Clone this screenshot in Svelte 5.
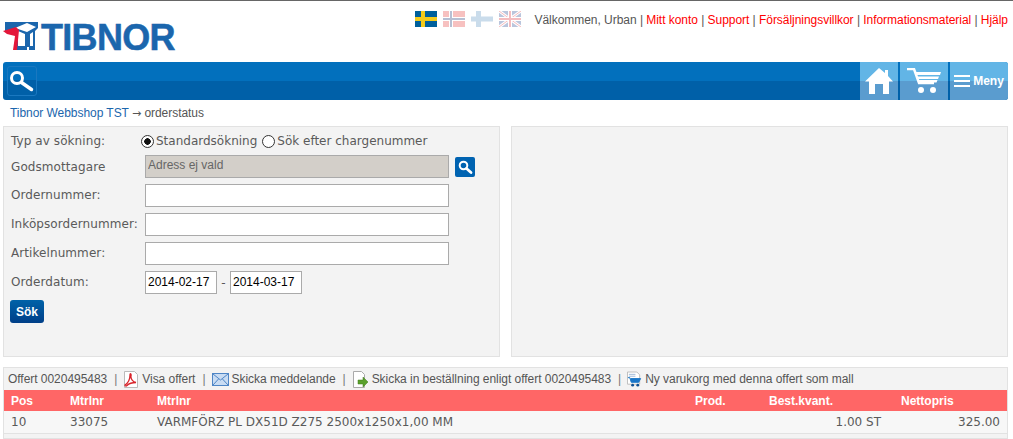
<script>
  const flags = [
    { id: 'se', faded: false },
    { id: 'no', faded: true },
    { id: 'fi', faded: true },
    { id: 'gb', faded: true }
  ];
  const links = ['Mitt konto', 'Support', 'Försäljningsvillkor', 'Informationsmaterial', 'Hjälp'];
  const rows = [
    { label: 'Ordernummer:' },
    { label: 'Inköpsordernummer:' },
    { label: 'Artikelnummer:' }
  ];
</script>

<div class="page">
  <header class="top">
    <div class="logo">
      <svg width="38" height="30" viewBox="0 0 38 30">
        <path d="M2 0h33v6l-3 3v19h-6V25h-2v3H14V25h-2V12L2 10z" fill="#1b66ad" />
        <path d="M12 6l12-5 9 4-9 5zM15 9l7 3v12h-7zM27 12l3-2v14h-3z" fill="#fff" />
        <path d="M0 9l13-4 3 3-2 20h-4l2-14-8-2z" fill="#e4173a" />
      </svg>
      <span class="logo-text">TIBNOR</span>
    </div>
    <div class="top-right">
      <div class="flags">
        {#each flags as f}
          <svg class:faded={f.faded} width="22" height="16" viewBox="0 0 22 16">
            {#if f.id === 'se'}
              <rect width="22" height="16" fill="#00609c" />
              <path d="M6 0h4v16H6zM0 6h22v4H0z" fill="#f4cb1c" />
            {:else if f.id === 'no'}
              <rect width="22" height="16" fill="#e8403f" />
              <path d="M6 0h4v16H6zM0 6h22v4H0z" fill="#fff" />
              <path d="M7 0h2v16H7zM0 7h22v2H0z" fill="#1f3a7a" />
            {:else if f.id === 'fi'}
              <rect width="22" height="16" fill="#fff" />
              <path d="M5 0h5v16H5zM0 5.500h22v5H0z" fill="#5c94c4" />
            {:else}
              <rect width="22" height="16" fill="#2b4f96" />
              <path d="M0 0l22 16M22 0L0 16" stroke="#fff" stroke-width="3" />
              <path d="M0 0l22 16M22 0L0 16" stroke="#e0323a" stroke-width="1" />
              <path d="M9 0h4v16H9zM0 6h22v4H0z" fill="#fff" />
              <path d="M10 0h2v16h-2zM0 7h22v2H0z" fill="#e0323a" />
            {/if}
          </svg>
        {/each}
      </div>
      <div class="welcome">
        Välkommen, Urban
        {#each links as l}
          <span class="pipe">|</span> <a href="#top">{l}</a>{' '}
        {/each}
      </div>
    </div>
  </header>

  <nav class="bar">
    <button class="bar-search" aria-label="Sök">
      <svg width="26" height="26" viewBox="0 0 26 26">
        <circle cx="8" cy="10" r="5.500" fill="none" stroke="#fff" stroke-width="3" />
        <path d="M12.500 14.500l10 7" stroke="#fff" stroke-width="3.500" stroke-linecap="round" />
      </svg>
    </button>
    <div class="bar-items">
      <div class="bar-item home">
        <svg width="28" height="26" viewBox="0 0 28 26">
          <path d="M14 0l6 5V2h3v6l5 5.500h-4V26h-6V16h-8v10H4V13.500H0z" fill="#fff" />
        </svg>
      </div>
      <div class="bar-item cart">
        <svg width="34" height="26" viewBox="0 0 34 26">
          <path d="M0 1h7l5 14h15" fill="none" stroke="#fff" stroke-width="2.500" />
          <path d="M8 4h26l-1 3H9zM10 8.500h22l-1 2.500H11zM11.500 12h19l-1 2.500H12.500z" fill="#fff" />
          <circle cx="14" cy="22" r="3" fill="#fff" />
          <circle cx="26" cy="22" r="3" fill="#fff" />
        </svg>
      </div>
      <div class="bar-item menu">
        <span class="burger"><i></i><i></i><i></i></span>
        <span>Meny</span>
      </div>
    </div>
  </nav>

  <div class="crumbs"><a href="#top">Tibnor Webbshop TST</a> <span class="arrow">→</span> orderstatus</div>

  <div class="panels">
    <section class="panel form">
      <div class="row type">
        <span class="label short">Typ av sökning:</span>
        <label class="radio"><input type="radio" name="typ" checked /> Standardsökning</label>
        <label class="radio"><input type="radio" name="typ" /> Sök efter chargenummer</label>
      </div>
      <div class="row">
        <span class="label">Godsmottagare</span>
        <input class="text disabled" value="Adress ej vald" readonly />
        <button class="pick" aria-label="Välj adress">
          <svg width="16" height="16" viewBox="0 0 16 16">
            <circle cx="6.500" cy="6.500" r="3.800" fill="none" stroke="#fff" stroke-width="2" />
            <path d="M9.500 9.500l4.500 4" stroke="#fff" stroke-width="2.800" stroke-linecap="round" />
          </svg>
        </button>
      </div>
      {#each rows as r}
        <div class="row">
          <span class="label up">{r.label}</span>
          <input class="text" />
        </div>
      {/each}
      <div class="row">
        <span class="label up">Orderdatum:</span>
        <input class="date" value="2014-02-17" />
        <span class="dash">-</span>
        <input class="date" value="2014-03-17" />
      </div>
      <button class="submit">Sök</button>
    </section>
    <section class="panel"></section>
  </div>

  <section class="offer">
    <div class="tools">
      <span>Offert 0020495483</span>
      <span class="sep">|</span>
      <span class="tool">
        <svg width="16" height="17" viewBox="0 0 16 17">
          <path d="M1.500.500h10l3 3v13h-13z" fill="#fff" stroke="#bbb" />
          <path d="M2 14c3-2 5-6 5-10 0-2 1.500-1.500 1 1-.5 3 2 6 5 6.500-3 0-7 1-9 3-1 1-2 .500-2-.500z" fill="none" stroke="#d8232a" stroke-width="1.300" />
        </svg>
        Visa offert
      </span>
      <span class="sep">|</span>
      <span class="tool">
        <svg width="17" height="13" viewBox="0 0 17 13">
          <rect x=".5" y=".5" width="16" height="12" fill="#c9dcf3" stroke="#4f86c6" />
          <path d="M1 1l7.500 6L16 1M1 12l5.500-6M16 12l-5.500-6" fill="none" stroke="#4f86c6" />
        </svg>
        Skicka meddelande
      </span>
      <span class="sep">|</span>
      <span class="tool">
        <svg width="17" height="17" viewBox="0 0 17 17">
          <path d="M1.500.500h8l3 3v13h-11z" fill="#fff" stroke="#aaa" />
          <path d="M6 9h5V6l5 5-5 5v-3H6z" fill="#5aa02c" stroke="#3d7a1a" stroke-width=".5" />
        </svg>
        Skicka in beställning enligt offert 0020495483
      </span>
      <span class="sep">|</span>
      <span class="tool">
        <svg width="15" height="17" viewBox="0 0 16 17">
          <path d="M.500.500h10l3 3v10h-13z" fill="#fff" stroke="#bbb" />
          <path d="M2 3h7M2 5h7" stroke="#9db7d6" />
          <path d="M1 6.500h2l1.500 5h8l2-4H4" fill="#1a76c8" stroke="#1a76c8" />
          <circle cx="6" cy="14.500" r="1.500" fill="#0d4f91" />
          <circle cx="11.500" cy="14.500" r="1.500" fill="#0d4f91" />
        </svg>
        Ny varukorg med denna offert som mall
      </span>
    </div>
    <table>
      <colgroup>
        <col class="c-pos" /><col class="c-nr" /><col class="c-desc" /><col class="c-prod" /><col class="c-qty" /><col class="c-price" />
      </colgroup>
      <thead>
        <tr>
          <th>Pos</th><th>Mtrlnr</th><th>Mtrlnr</th><th>Prod.</th><th>Best.kvant.</th><th class="price-head">Nettopris</th>
        </tr>
      </thead>
      <tbody>
        <tr>
          <td>10</td><td>33075</td><td>VARMFÖRZ PL DX51D Z275 2500x1250x1,00 MM</td><td></td><td class="num">1.00 ST</td><td class="num">325.00</td>
        </tr>
      </tbody>
    </table>
  </section>
</div>

<style>
  :global(body) {
    margin: 0;
    background: #fff;
    font-family: "Liberation Sans", Arial, sans-serif;
    font-size: 12px;
    color: #555;
  }

  .page {
    height: 439px;
    overflow: hidden;
    border-top: 1px solid #666;
    box-sizing: border-box;
  }

  .top {
    display: flex;
    justify-content: space-between;
    height: 61px;
    padding: 0 5px 0 3px;
  }

  .logo {
    display: flex;
    align-items: flex-start;
    height: 30px;
    margin-top: 21px;
  }

  .logo-text {
    margin-top: 3px;
    font-size: 36px;
    line-height: 26px;
    font-weight: 700;
    color: #1b66ad;
    letter-spacing: -0.7px;
    -webkit-text-stroke: 0.5px #1b66ad;
  }

  .top-right {
    display: flex;
    gap: 14px;
    padding-top: 10px;
  }

  .flags {
    display: flex;
    gap: 6px;
  }

  .faded {
    opacity: 0.32;
  }

  .welcome {
    padding-top: 2px;
    line-height: 14px;
    white-space: nowrap;
    letter-spacing: -0.04px;
  }

  .welcome a {
    color: #f00;
    text-decoration: none;
  }

  .bar {
    display: flex;
    justify-content: space-between;
    height: 38px;
    margin: 0 5px 0 3px;
    border-radius: 3px;
    background: linear-gradient(#0270bd 50%, #0060a8 50%);
  }

  .bar-search {
    width: 30px;
    height: 30px;
    margin: 4px;
    padding: 0;
    display: flex;
    align-items: center;
    justify-content: center;
    border: 1px solid #1a78c0;
    border-radius: 3px;
    background: linear-gradient(#0270bd 45%, #0060a8 45%);
  }

  .bar-items {
    display: flex;
    gap: 2px;
  }

  .bar-item {
    display: flex;
    align-items: center;
    justify-content: center;
    color: #fff;
    font-weight: 700;
    background: linear-gradient(#62b5e6 50%, #5a9ccf 50%);
  }

  .home {
    width: 38px;
  }

  .cart {
    width: 48px;
  }

  .menu {
    width: 58px;
    gap: 3px;
    border-radius: 0 3px 3px 0;
  }

  .burger {
    display: flex;
    flex-direction: column;
    gap: 3px;
  }

  .burger i {
    display: block;
    width: 16px;
    height: 2px;
    background: #fff;
  }

  .crumbs {
    height: 26px;
    padding-left: 10px;
    line-height: 26px;
    letter-spacing: -0.05px;
  }

  .crumbs a {
    color: #1b66ad;
    text-decoration: none;
  }

  .arrow {
    font-family: "DejaVu Sans", sans-serif;
    font-size: 11px;
  }

  .panels {
    display: grid;
    grid-template-columns: 497px 497px;
    gap: 11px;
    margin: 0 5px 0 3px;
  }

  .panel {
    height: 231px;
    box-sizing: border-box;
    border: 1px solid #e2e2e2;
    background: #f3f3f3;
  }

  .form {
    padding: 0 6px;
    font-family: "DejaVu Sans", Verdana, sans-serif;
    color: #5a5a5a;
  }

  .row {
    display: flex;
    align-items: center;
    height: 23px;
    margin-bottom: 6px;
  }

  .type {
    height: 22px;
    margin-top: 3px;
    margin-bottom: 3px;
  }

  .label {
    width: 134px;
    margin-left: 1px;
    flex: none;
    white-space: nowrap;
    letter-spacing: 0.08px;
  }

  .short {
    width: 130px;
  }

  .up {
    margin-top: -2px;
  }

  .radio {
    display: flex;
    align-items: center;
    gap: 2px;
    margin-right: 5px;
    white-space: nowrap;
  }

  .radio input {
    appearance: none;
    box-sizing: border-box;
    width: 13px;
    height: 13px;
    margin: 0;
    border: 1px solid #333;
    border-radius: 50%;
    background: #fff;
  }

  .radio input:checked {
    background: radial-gradient(circle, #111 3px, #fff 3.500px);
  }

  .text,
  .date {
    box-sizing: border-box;
    height: 23px;
    padding: 0 2px 1px;
    border: 1px solid #aaa;
    background: #fff;
    font-family: "Liberation Sans", Arial, sans-serif;
    font-size: 12px;
    color: #000;
    outline: none;
  }

  .text {
    width: 304px;
  }

  .disabled {
    padding-bottom: 3px;
    background: #d3cfc9;
    color: #666;
  }

  .date {
    width: 72px;
  }

  .dash {
    width: 13px;
    text-align: center;
  }

  .pick {
    width: 20px;
    height: 20px;
    margin-left: 6px;
    padding: 0;
    display: flex;
    align-items: center;
    justify-content: center;
    border: none;
    border-radius: 2px;
    background: #0063b1;
  }

  .submit {
    display: block;
    width: 34px;
    height: 23px;
    padding: 0;
    border: none;
    border-radius: 3px;
    background: linear-gradient(#0062a8, #003f88);
    color: #fff;
    font-family: "Liberation Sans", Arial, sans-serif;
    font-size: 12px;
    font-weight: 700;
  }

  .offer {
    margin: 10px 5px 0 3px;
    height: 72px;
    border: 1px solid #e2e2e2;
    background: #f3f3f3;
    box-sizing: border-box;
  }

  .tools {
    display: flex;
    align-items: center;
    gap: 6px;
    height: 22px;
    padding-left: 4px;
    white-space: nowrap;
    letter-spacing: -0.04px;
  }

  .tool {
    display: flex;
    align-items: center;
    gap: 3px;
  }

  .sep {
    margin-left: 1px;
    color: #777;
  }

  table {
    width: 1003px;
    table-layout: fixed;
    border-collapse: collapse;
  }

  .c-pos { width: 59px; }
  .c-nr { width: 87px; }
  .c-desc { width: 538px; }
  .c-prod { width: 74px; }
  .c-qty { width: 126px; }
  .c-price { width: 119px; }

  th {
    height: 21px;
    padding: 1px 7px 0;
    box-sizing: border-box;
    background: #f66;
    color: #fff;
    font-size: 12px;
    text-align: left;
  }

  .price-head {
    padding-left: 13px;
  }

  td {
    height: 22px;
    padding: 1px 7px 0;
    box-sizing: border-box;
    background: #f7f7f7;
    border-bottom: 1px solid #e2e2e2;
    font-family: "DejaVu Sans", Verdana, sans-serif;
    font-size: 12px;
    color: #5a5a5a;
  }

  .num {
    text-align: right;
  }
</style>
